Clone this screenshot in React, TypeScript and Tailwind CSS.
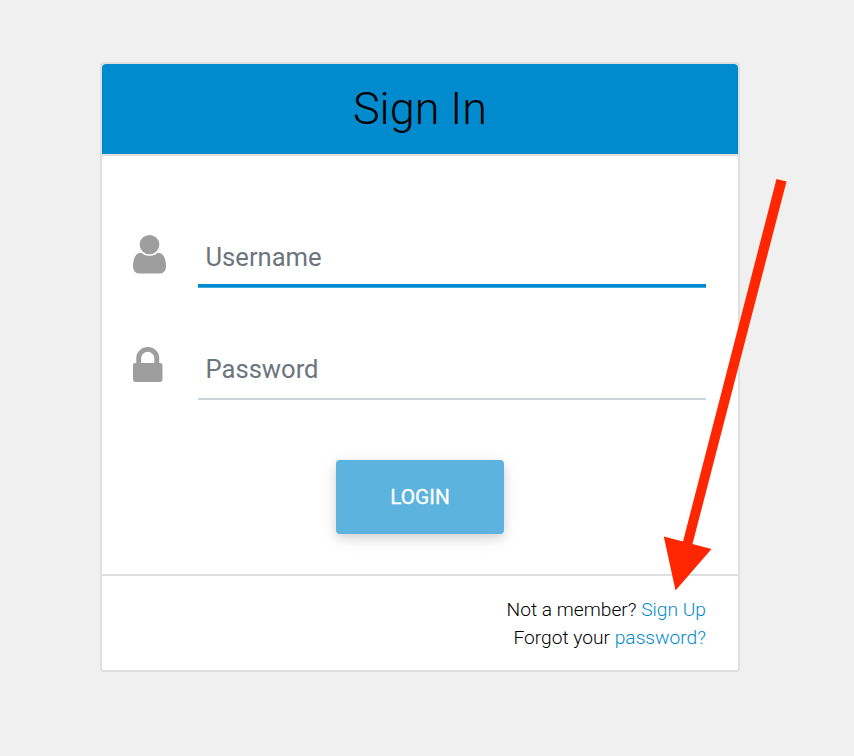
import React from "react";

function UserIcon() {
  return (
    <svg className="mt-[1px] h-[38.5px] w-[33px]" viewBox="0 0 1280 1536" preserveAspectRatio="none" fill="#9e9e9e">
      <g transform="translate(0 1408) scale(1 -1)">
        <path d="M1280 137q0 -109 -62.5 -187t-150.5 -78h-854q-88 0 -150.5 78t-62.5 187q0 85 8.5 160.5t31.5 152t58.5 131t94 89t134.5 34.5q131 -128 313 -128t313 128q76 0 134.5 -34.5t94 -89t58.5 -131t31.5 -152t8.5 -160.5zM1024 1024q0 -159 -112.5 -271.5t-271.5 -112.5t-271.5 112.5t-112.5 271.5t112.5 271.5t271.5 112.5t271.5 -112.5t112.5 -271.5z" />
      </g>
    </svg>
  );
}

function LockIcon() {
  return (
    <svg className="mt-[1px] h-[35px] w-[29.5px]" viewBox="0 0 1152 1408" preserveAspectRatio="none" fill="#9e9e9e">
      <g transform="translate(0 1408) scale(1 -1)">
        <path d="M320 768h512v192q0 106 -75 181t-181 75t-181 -75t-75 -181v-192zM1152 672v-576q0 -40 -28 -68t-68 -28h-960q-40 0 -68 28t-28 68v576q0 40 28 68t68 28h32v192q0 184 132 316t316 132t316 -132t132 -316v-192h32q40 0 68 -28t28 -68z" />
      </g>
    </svg>
  );
}

export default function App() {
  return (
    <div className="relative h-[756px] w-[854px] overflow-hidden bg-[#f0f0f0] pl-[100px] pt-[62px] font-[Roboto,sans-serif]">
      <div className="flex h-[610px] w-[640px] flex-col rounded-[4px] border-2 border-[#dfdfdf] bg-white">
        <header className="flex h-[92px] shrink-0 justify-center rounded-t-[4px] border-b-2 border-[#dfdfdf] bg-[#008bcf] pt-[17px] text-[45px] font-light leading-[56px] text-black">
          Sign In
        </header>
        <main className="flex h-[420px] shrink-0 flex-col border-b-2 border-[#dfdfdf] px-[31px] pt-[78px]">
          <div className="flex h-[53px]">
            <div className="w-[65px]"><UserIcon /></div>
            <div className="w-[508px] border-b-3 border-[#008bcf] pl-[7.5px] pt-[7px] text-[25.6px] leading-[32px] text-[#6c757d] shadow-[0_1px_0_#40a8db]">Username</div>
          </div>
          <div className="mt-[59px] flex h-[54px]">
            <div className="w-[65px]"><LockIcon /></div>
            <div className="w-[508px] border-b-2 border-[#ced4da] pl-[7.5px] pt-[7px] text-[25.6px] leading-[32px] text-[#6c757d]">Password</div>
          </div>
          <button className="mt-[60px] h-[74px] w-[168px] self-center rounded-[4px] bg-[#5bb3de] pt-[2px] text-[20.8px] font-normal text-white [-webkit-text-stroke:0.3px_white] shadow-[0_4px_10px_rgba(0,0,0,0.12),0_4px_20px_rgba(0,0,0,0.08)]">LOGIN</button>
        </main>
        <footer className="pr-[32px] pt-[20px] text-right text-[19.2px] font-light leading-[28px] text-black">
          <p>Not a member? <a className="text-[#008bcf]">Sign Up</a></p>
          <p>Forgot your <a className="text-[#008bcf]">password?</a></p>
        </footer>
      </div>
      <svg className="absolute left-0 top-0" width="854" height="756" fill="#ff2600">
        <path d="M776.5 179L786.5 181.5L692.5 544L711.5 549L675.5 590.5L663.8 536.5L683 541.5Z" />
      </svg>
    </div>
  );
}
